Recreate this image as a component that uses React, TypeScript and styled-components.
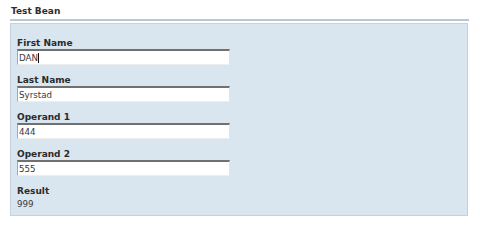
import styled, { createGlobalStyle } from 'styled-components';

const GlobalStyle = createGlobalStyle`
  html, body {
    margin: 0;
    padding: 0;
    background: #ffffff;
  }
  body {
    font-family: "DejaVu Sans", Verdana, sans-serif;
    color: #333333;
  }
`;

interface Field {
  label: string;
  value: string;
  focused?: boolean;
}

const fields: Field[] = [
  { label: 'First Name', value: 'DAN', focused: true },
  { label: 'Last Name', value: 'Syrstad' },
  { label: 'Operand 1', value: '444' },
  { label: 'Operand 2', value: '555' },
];

export default function App() {
  return (
    <>
      <GlobalStyle />
      <UIPage>
        <UITitle>Test Bean</UITitle>
        <UIRule />
        <UIPanel>
          {fields.map(field => (
            <UIGroup key={field.label}>
              <UILabel>{field.label}</UILabel>
              <UIInputBox>
                {field.value}
                {field.focused && <UICaret />}
              </UIInputBox>
            </UIGroup>
          ))}
          <UIGroup>
            <UILabel>Result</UILabel>
            <UIValue>999</UIValue>
          </UIGroup>
        </UIPanel>
      </UIPage>
    </>
  );
}

const UIPage = styled.div`
  width: 480px;
  height: 226px;
  padding: 6px 11px 0 10px;
  box-sizing: border-box;
`;

const UITitle = styled.div`
  font-weight: bold;
  font-size: 9px;
  line-height: 11px;
  color: #2e2e2e;
  padding-left: 1px;
`;

const UIRule = styled.div`
  height: 2px;
  margin-top: 2px;
  background: #b9c8d7;
`;

const UIPanel = styled.div`
  margin-top: 2px;
  width: 458px;
  height: 193px;
  box-sizing: border-box;
  background: #d9e5ef;
  border: 1px solid #c2d2e2;
  padding: 14px 0 0 6px;
  display: flex;
  flex-direction: column;
  gap: 10px;
`;

const UIGroup = styled.div`
  display: flex;
  flex-direction: column;
`;

const UILabel = styled.div`
  font-weight: bold;
  font-size: 9px;
  line-height: 11px;
  color: #2b2b2b;
`;

const UIInputBox = styled.div`
  width: 213px;
  height: 16px;
  box-sizing: border-box;
  background: #ffffff;
  border-top: 2px solid #707070;
  border-left: 1px solid #a8a8a8;
  border-right: 1px solid #e4e4e4;
  border-bottom: 1px solid #eeeeee;
  font-size: 8.7px;
  line-height: 12px;
  padding-left: 1px;
  color: #3a3a3a;
  display: flex;
  align-items: center;
`;

const UICaret = styled.span`
  display: inline-block;
  width: 1px;
  height: 10px;
  background: #111111;
`;

const UIValue = styled.div`
  font-size: 8.7px;
  line-height: 12px;
  margin-top: 1px;
  color: #3a3a3a;
`;
